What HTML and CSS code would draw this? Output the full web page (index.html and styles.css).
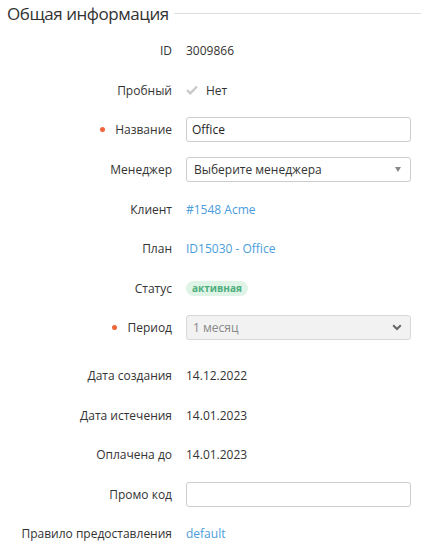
FILE: index.html
```html
<!DOCTYPE html>
<html lang="ru">
<head>
<meta charset="utf-8">
<link rel="stylesheet" href="styles.css">
</head>
<body>
<div class="panel">
  <div class="legend">
    <span class="legend-title">Общая информация</span>
    <span class="legend-line"></span>
  </div>
  <div class="form">
    <div class="row">
      <div class="label">ID</div>
      <div class="value">3009866</div>
    </div>
    <div class="row">
      <div class="label">Пробный</div>
      <div class="value check-value">
        <svg class="check" width="12" height="10" viewBox="0 0 12 10"><path d="M1 5.2 L4.3 8.3 L11 1.5" fill="none" stroke="#c9c9c9" stroke-width="2.4"/></svg>
        <span>Нет</span>
      </div>
    </div>
    <div class="row">
      <div class="label"><span class="req"></span>Название</div>
      <div class="value"><input class="input" type="text" value="Office"></div>
    </div>
    <div class="row">
      <div class="label">Менеджер</div>
      <div class="value">
        <div class="select">
          <span>Выберите менеджера</span>
          <span class="tri"></span>
        </div>
      </div>
    </div>
    <div class="row">
      <div class="label">Клиент</div>
      <div class="value"><a class="link" href="#">#1548 Acme</a></div>
    </div>
    <div class="row">
      <div class="label">План</div>
      <div class="value"><a class="link" href="#">ID15030 - Office</a></div>
    </div>
    <div class="row">
      <div class="label">Статус</div>
      <div class="value"><span class="badge">активная</span></div>
    </div>
    <div class="row row-gap">
      <div class="label"><span class="req"></span>Период</div>
      <div class="value">
        <div class="select disabled">
          <span>1 месяц</span>
          <svg class="chev" width="10" height="7" viewBox="0 0 10 7"><path d="M1.2 1.3 L5 5 L8.8 1.3" fill="none" stroke="#666" stroke-width="2"/></svg>
        </div>
      </div>
    </div>
    <div class="row">
      <div class="label">Дата создания</div>
      <div class="value">14.12.2022</div>
    </div>
    <div class="row">
      <div class="label">Дата истечения</div>
      <div class="value">14.01.2023</div>
    </div>
    <div class="row">
      <div class="label">Оплачена до</div>
      <div class="value">14.01.2023</div>
    </div>
    <div class="row">
      <div class="label">Промо код</div>
      <div class="value"><input class="input" type="text" value=""></div>
    </div>
    <div class="row">
      <div class="label">Правило предоставления</div>
      <div class="value"><a class="link" href="#">default</a></div>
    </div>
  </div>
</div>
</body>
</html>
```

FILE: styles.css
```css
html, body {
  margin: 0;
  padding: 0;
  background: #ffffff;
}

body {
  font-family: "Open Sans", "Liberation Sans", sans-serif;
  font-size: 12px;
  color: #333333;
}

.panel {
  padding: 0 0 0 7px;
}

.legend {
  display: flex;
  align-items: center;
  height: 27px;
}

.legend-title {
  font-size: 17px;
  letter-spacing: -0.45px;
  color: #333333;
  line-height: 27px;
  white-space: nowrap;
}

.legend-line {
  flex: 1;
  height: 1px;
  background: #dddddd;
  margin-left: 5px;
}

.form {
  padding-top: 4px;
  padding-right: 10px;
}

.row {
  display: grid;
  grid-template-columns: 165px 1fr;
  column-gap: 14px;
  align-items: center;
  height: 39.6px;
}

.row-gap {
  margin-bottom: 8px;
}

.label {
  text-align: right;
  white-space: nowrap;
  display: flex;
  justify-content: flex-end;
  align-items: center;
}

.req {
  width: 5px;
  height: 5px;
  border-radius: 50%;
  background: #f0643c;
  margin-right: 10px;
}

.value {
  display: flex;
  align-items: center;
}

.check-value .check {
  margin-right: 8px;
}

.input {
  box-sizing: border-box;
  width: 225px;
  height: 25px;
  border: 1px solid #cccccc;
  border-radius: 3px;
  padding: 0 5px;
  font-family: "Open Sans", "Liberation Sans", sans-serif;
  font-size: 12px;
  color: #222222;
  outline: none;
}

.select {
  box-sizing: border-box;
  width: 225px;
  height: 25px;
  border: 1px solid #cccccc;
  border-radius: 3px;
  padding: 0 8px 0 7px;
  display: flex;
  align-items: center;
  justify-content: space-between;
  color: #333333;
}

.select.disabled {
  background: #f2f2f2;
  border-color: #d8d8d8;
  color: #888888;
  padding-left: 6px;
}

.tri {
  width: 0;
  height: 0;
  border-left: 3.5px solid transparent;
  border-right: 3.5px solid transparent;
  border-top: 5px solid #888888;
  margin-right: 1px;
}

.link {
  color: #4a9ddc;
  text-decoration: none;
}

.badge {
  display: inline-block;
  background: #dff3e7;
  color: #4caf7b;
  font-weight: bold;
  font-size: 10px;
  line-height: 15px;
  padding: 0 6px;
  border-radius: 8px;
}
```
